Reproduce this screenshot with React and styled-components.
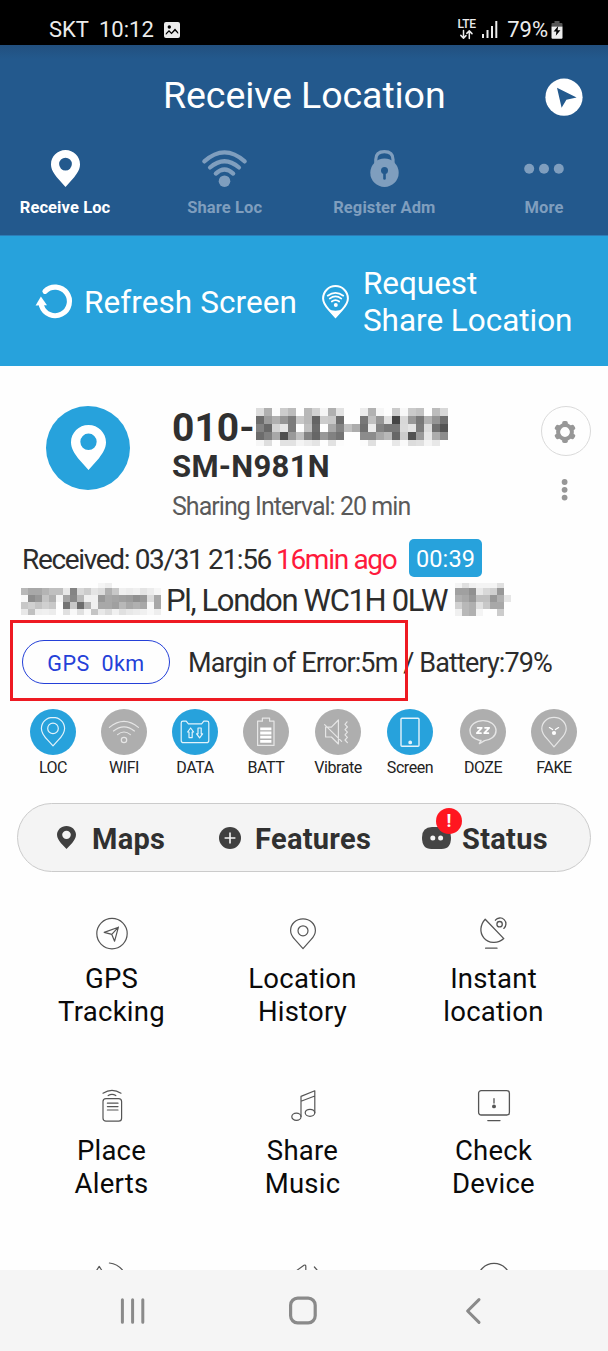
import React from "react";
import styled, { createGlobalStyle } from "styled-components";

const Global = createGlobalStyle`
  * { box-sizing: border-box; }
  body { margin: 0; background: #fff; font-family: Roboto, "Liberation Sans", sans-serif; }
  svg { display: block; flex: none; overflow: visible; }
`;

const Screen = styled.div`
  width: 608px;
  height: 1351px;
  overflow: hidden;
  display: flex;
  flex-direction: column;
  background: #fefefe;
`;

/* ---------- status bar ---------- */
const StatusBar = styled.div`
  height: 45px;
  flex: none;
  background: #000;
  color: #ececec;
  display: flex;
  align-items: flex-start;
  justify-content: space-between;
  padding: 16px 45px 0 49px;
  font-size: 22px;
  line-height: 27px;
  white-space: nowrap;
`;
const StatusGroup = styled.div`
  display: flex;
  align-items: center;
  gap: ${(p) => p.$gap}px;
  height: 27px;
`;
const NetType = styled.div`
  display: flex;
  flex-direction: column;
  align-items: center;
  font-size: 12px;
  font-weight: 500;
  line-height: 11px;
  letter-spacing: -0.2px;
  width: 19px;
  padding-bottom: 1px;
`;

/* ---------- header ---------- */
const Header = styled.header`
  height: 191px;
  flex: none;
  background: linear-gradient(#22507f, #23598d 14px);
  border-bottom: 1px solid #2c7db8;
`;
const TitleBar = styled.div`
  height: 105px;
  display: flex;
  align-items: flex-start;
  justify-content: flex-end;
  padding: 33px 25px 0 0;
`;
const Title = styled.h1`
  margin: -5px 0 0;
  flex: 1;
  padding-left: 163px;
  font-size: 37.5px;
  font-weight: 400;
  line-height: 44px;
  letter-spacing: -0.08px;
  color: #fff;
`;
const Tabs = styled.nav`
  display: flex;
  justify-content: space-between;
  padding: 0 8px 0 9px;
`;
const Tab = styled.div`
  width: 112px;
  display: flex;
  flex-direction: column;
  align-items: center;
  gap: 11px;
  color: ${(p) => (p.$active ? "#fff" : "#7f9ebe")};
  font-size: 16.5px;
  font-weight: 700;
  line-height: 20px;
  letter-spacing: 0.1px;
  white-space: nowrap;
`;

/* ---------- action band ---------- */
const ActionBand = styled.div`
  height: 130px;
  flex: none;
  background: #27a2dc;
  color: #fff;
  display: flex;
  align-items: center;
  padding: 2px 0 0 36px;
`;
const ActionLabel = styled.div`
  font-size: 31.5px;
  line-height: 37px;
  letter-spacing: ${(p) => p.$ls || 0}px;
  white-space: nowrap;
  margin: ${(p) => p.$m};
`;
const RequestIcon = styled.span`
  margin: 0 14px 2px 25px;
`;

/* ---------- device card ---------- */
const Device = styled.section`
  display: flex;
  height: 166px;
  flex: none;
  padding: 40px 17px 0 46px;
`;
const Avatar = styled.div`
  width: 84px;
  height: 84px;
  border-radius: 50%;
  background: #27a2dc;
  display: flex;
  justify-content: center;
  padding-top: 19px;
`;
const DeviceInfo = styled.div`
  flex: 1;
  padding: 2px 0 0 42px;
  color: #303030;
  white-space: nowrap;
`;
const Phone = styled.div`
  display: flex;
  align-items: flex-start;
  height: 40px;
  font-size: 39px;
  font-weight: 700;
  line-height: 41px;
  letter-spacing: 0;
`;
const PhonePrefix = styled.span`
  width: 84px;
`;
const Model = styled.div`
  font-size: 31px;
  font-weight: 700;
  line-height: 38px;
  letter-spacing: 0.3px;
`;
const Interval = styled.div`
  font-size: 25px;
  line-height: 42px;
  letter-spacing: -0.97px;
  color: #5a5a5a;
`;
const DeviceActions = styled.div`
  width: 51px;
  display: flex;
  flex-direction: column;
  align-items: center;
  gap: 23px;
`;
const GearButton = styled.div`
  width: 50px;
  height: 50px;
  border: 1.5px solid #dadada;
  border-radius: 50%;
  display: flex;
  align-items: center;
  justify-content: center;
  padding: 1px 2px 0 0;
`;

/* ---------- report lines ---------- */
const Report = styled.section`
  position: relative;
  height: 177px;
  flex: none;
  padding: 6px 0 0 21px;
  color: #2c2c2c;
  white-space: nowrap;
`;
const ReceivedLine = styled.div`
  display: flex;
  align-items: center;
  height: 40px;
  font-size: 28px;
  letter-spacing: -1.3px;
`;
const Received = styled.span`
  padding: 2px 0 0 1px;
  letter-spacing: -1.35px;
  width: 251px;
`;
const Ago = styled.span`
  color: #ff1a3c;
  width: 137px;
  padding: 2px 0 0 4px;
`;
const Countdown = styled.span`
  width: 73px;
  height: 38px;
  border-radius: 5px;
  background: #27a2dc;
  color: #fff;
  font-size: 23.5px;
  line-height: 40px;
  letter-spacing: 0.1px;
  text-align: center;
`;
const AddressLine = styled.div`
  display: flex;
  align-items: flex-start;
  padding-top: 5px;
  height: 40px;
  font-size: 31px;
  line-height: 35px;
  letter-spacing: -1.35px;
`;
const AddressText = styled.span`
  width: 294px;
  padding-left: 5px;
`;
const AccuracyLine = styled.div`
  display: flex;
  align-items: center;
  height: 88px;
  font-size: 27px;
  letter-spacing: -0.88px;
  gap: 18px;
  padding-left: 1px;
`;
const Accuracy = styled.span`
  padding-top: 2px;
`;
const GpsPill = styled.div`
  width: 148px;
  height: 44px;
  border: 1.6px solid #2440d8;
  border-radius: 22px;
  color: #2440d8;
  font-size: 21.5px;
  line-height: 45px;
  letter-spacing: 0.5px;
  text-align: center;
  white-space: pre;
`;
const Highlight = styled.div`
  position: absolute;
  left: 10px;
  top: 88px;
  width: 398px;
  height: 81px;
  border: 3px solid #ee1a22;
`;

/* ---------- sensor chips ---------- */
const Sensors = styled.section`
  display: flex;
  height: 94px;
  flex: none;
  padding: 0 0 0 18px;
`;
const Sensor = styled.div`
  width: 70px;
  margin-left: ${(p) => p.$gap}px;
  display: flex;
  flex-direction: column;
  align-items: center;
  gap: 1px;
  font-size: 16px;
  line-height: 24px;
  letter-spacing: -0.45px;
  color: #222;
`;
const SensorDot = styled.div`
  width: 46px;
  height: 46px;
  border-radius: 50%;
  background: ${(p) => (p.$on ? "#27a2dc" : "#aeaeae")};
  display: flex;
  align-items: center;
  justify-content: center;
`;

/* ---------- segmented bar ---------- */
const Segments = styled.nav`
  position: relative;
  height: 69px;
  flex: none;
  margin: 0 17px;
  border: 1.5px solid #cbcbcb;
  border-radius: 35px;
  background: #f4f4f4;
  display: flex;
  align-items: center;
  padding-left: 39px;
  color: #303030;
  font-size: 29px;
  font-weight: 700;
  letter-spacing: 0.3px;
  white-space: nowrap;
`;
const Segment = styled.div`
  display: flex;
  align-items: center;
  width: ${(p) => p.$w}px;
  gap: ${(p) => p.$gap}px;
`;
const SegmentLabel = styled.span`
  padding-top: 2px;
`;
const AlertBadge = styled.div`
  position: absolute;
  left: 418px;
  top: 4px;
  width: 26px;
  height: 26px;
  border-radius: 50%;
  background: #ff1620;
  color: #fff;
  font-size: 18px;
  line-height: 26px;
  text-align: center;
`;

/* ---------- feature grid ---------- */
const Grid = styled.section`
  flex: 1;
  min-height: 0;
  overflow: hidden;
  display: grid;
  grid-template-columns: repeat(3, 191px);
  grid-auto-rows: 172px;
  padding: 46px 0 0 16px;
`;
const Feature = styled.div`
  display: flex;
  flex-direction: column;
  align-items: center;
  gap: 13px;
  color: #0a0a0a;
  font-size: 27.5px;
  line-height: 32.5px;
  letter-spacing: 0.25px;
  text-align: center;
  white-space: pre-line;
`;

const NavBar = styled.footer`
  height: 81px;
  flex: none;
  background: #f5f5f5;
  display: flex;
  align-items: center;
  gap: 143px;
  padding-left: 120px;
`;
const BackKey = styled.div`
  margin-left: 5px;
`;

/* ---------- pixelated (redacted) areas ---------- */
const PHONE_CELLS = [
  "dd b0 fc cc bc ff b8 d2 f5 b0 e2 ff ff ec b2 f6 ff cb f8 ca c2 ff bc d8",
  "6c 9c b0 96 7c c8 b8 64 cc c8 6c ff ff 78 c0 96 e0 44 d8 98 78 b2 94 70",
  "82 68 d4 e6 7c ff c0 6c ff a8 84 c0 ac 70 ec 82 76 76 da e4 7c dc 70 54",
  "6c 80 a8 50 9a c0 84 66 98 82 74 ff ff 8c 8c a8 b8 66 cc 52 9a e6 ac 8c",
  "f6 de ff e2 e2 f4 ec e4 ff e2 fc ff ff fc e0 ff ff e8 fa dc e0 f4 e8 ff",
];
const STREET_CELLS = [
  "ff ff ff ff ff ff ff ff ff ff ff f5 ee ff ff ff ff ff ff ff",
  "b8 a8 a8 b4 c0 c0 e8 84 d8 cc e4 dc b0 c8 f0 ec f0 e4 ec f6",
  "f8 8c 98 c4 b0 f4 a4 88 b8 f0 f0 98 a8 a4 a0 9c 90 98 dc a8",
  "c8 d0 c4 d0 c8 ff 74 c8 6c b4 f0 a8 a8 a0 b8 a8 b0 a8 f8 a8",
  "e8 c0 ee f0 ec ff e0 f8 e0 f8 c4 e8 dc f0 e0 e8 ec f0 f8 ee",
];
const TAIL_CELLS = [
  "f4 e0 f0 f4 f4 f4 e0 ff",
  "a0 a0 90 e8 d8 d0 98 ff",
  "b0 a8 98 c0 c0 98 b0 e6",
  "d0 b8 b0 e0 c8 a8 a8 ff",
  "f0 b8 b0 f4 ff ff cc ff",
];
function Mosaic({ cells, size, heights }) {
  const rows = cells.map((r) => r.split(" "));
  const tops = heights.map((_, i) => heights.slice(0, i).reduce((a, b) => a + b, 0));
  const total = heights.reduce((a, b) => a + b, 0);
  return (
    <svg width={rows[0].length * size} height={total} shapeRendering="crispEdges">
      {rows.map((r, y) =>
        r.map((c, x) =>
          c === "ff" ? null : (
            <rect key={x + "-" + y} x={x * size} y={tops[y]} width={size} height={heights[y]} fill={"#" + c + c + c} />
          )
        )
      )}
    </svg>
  );
}

/* ---------- icons ---------- */
const Line = ({ w, h, sw = 1.2, c = "#555", vb, children }) => (
  <svg width={w} height={h} viewBox={vb || `0 0 ${w} ${h}`} fill="none" stroke={c} strokeWidth={sw} strokeLinecap="round" strokeLinejoin="round">
    {children}
  </svg>
);
const Pin = ({ w, h, color, r = 6.6, cy = 14.5 }) => (
  <svg width={w} height={h} viewBox="0 0 30 38" preserveAspectRatio="none" fill={color} fillRule="evenodd">
    <path d={`M15 0C6.7 0 0 6.6 0 14.6C0 20 3 24 6 28L15 38L24 28C27 24 30 20 30 14.6C30 6.6 23.3 0 15 0Z M15 ${cy - r}a${r} ${r} 0 1 1 0 ${2 * r}a${r} ${r} 0 1 1 0 ${-2 * r}Z`} />
  </svg>
);

const ImageIcon = () => (
  <svg width="16" height="16" viewBox="0 0 16 16">
    <rect width="16" height="16" rx="2" fill="#ececec" />
    <circle cx="5.3" cy="5" r="1.7" fill="#000" />
    <path d="M1.8 11.2L5 8L7.5 10.6L11 6.6L14.2 10.2V12L11 8.8L7.5 12.2L5 9.8L1.8 13Z" fill="#000" />
  </svg>
);
const Arrows = () => (
  <Line w={13} h={9} c="#ececec" sw={1.5}>
    <path d="M3.5 .5V8M.8 5.4L3.5 8.1L6 5.6M9.3 8.5V1M6.8 3.4L9.3 .9L12 3.6" />
  </Line>
);
const Signal = () => (
  <svg width="16" height="17" viewBox="0 0 16 17" fill="#ececec">
    <rect x="0" y="13" width="2" height="4" />
    <rect x="4.5" y="9" width="2" height="8" />
    <rect x="9" y="5" width="2" height="12" />
    <rect x="13.3" y="0" width="2" height="17" />
  </svg>
);
const BatteryIcon = () => (
  <svg width="12" height="18" viewBox="0 0 12 18">
    <path d="M3.5 0H8.5V2H10.5Q11.5 2 11.5 3V5.5H.5V3Q.5 2 1.5 2H3.5Z" fill="#555" />
    <path d="M.5 5.5H11.5V16.5Q11.5 17.7 10.5 17.7H1.5Q.5 17.7 .5 16.5Z" fill="#ececec" />
    <path d="M7.2 5L2.6 10.6H5.4L4.8 14.8L9.4 9.2H6.6Z" fill="#000" />
  </svg>
);
const LocateIcon = () => (
  <svg width="38" height="38" viewBox="0 0 38 38">
    <circle cx="19" cy="19.2" r="18.6" fill="#fff" />
    <path d="M12 9.8L31.6 19.6L21.4 21.8L16.6 29.8Z" fill="#23598d" />
  </svg>
);
const WifiTab = () => (
  <Line w={45} h={37} c="#7f9ebe" sw={4.2}>
    <path d="M2.3 11.4Q22.5 -6.6 42.7 11.4M8 17.5Q22.5 5 37 17.5M13.8 23.6Q22.5 15.4 31.2 23.6" />
    <circle cx="22.5" cy="31.2" r="5.8" fill="#7f9ebe" stroke="none" />
  </Line>
);
const LockTab = () => (
  <svg width="29" height="37" viewBox="0 0 29 37">
    <path d="M5.8 16V9.5Q5.8 1.6 14.4 1.6T23 9.5V16" fill="none" stroke="#7f9ebe" strokeWidth="3.2" />
    <circle cx="14.5" cy="22.8" r="14.2" fill="#7f9ebe" />
    <circle cx="14.5" cy="20.4" r="3.5" fill="#23598d" />
    <path d="M14.5 20V28.4" stroke="#23598d" strokeWidth="2.6" strokeLinecap="round" />
  </svg>
);
const DotsTab = () => (
  <svg width="40" height="37" viewBox="0 0 40 37" fill="#7f9ebe">
    <circle cx="5.2" cy="18.8" r="5" />
    <circle cx="20" cy="18.8" r="5" />
    <circle cx="34.8" cy="18.8" r="5" />
  </svg>
);
const RefreshIcon = () => (
  <svg width="37" height="34" viewBox="0 0 37 34">
    <path d="M9 6.3A14.3 14.3 0 1 1 5.6 21" fill="none" stroke="#fff" strokeWidth="5.2" strokeLinecap="round" />
    <path d="M4.9 11.6L11 20.2L-.4 20.4Z" fill="#fff" />
  </svg>
);
const PinWifi = () => (
  <svg width="27" height="33" viewBox="0 0 27 33" fill="none" stroke="#fff" strokeLinecap="round">
    <path d="M13.5 1.1C6.6 1.1 1.1 6.6 1.1 13.4C1.1 18.3 4 21.5 7 24.8L13.5 32L20 24.8C23 21.5 25.9 18.3 25.9 13.4C25.9 6.6 20.4 1.1 13.5 1.1Z" strokeWidth="2" />
    <path d="M5.6 23.4Q13.5 28 21.4 23.4L13.5 33Z" fill="#fff" stroke="none" />
    <path d="M5.7 10.7Q13.5 5 21.3 10.7M7.7 13.6Q13.5 9.2 19.3 13.6M9.8 16.5Q13.5 13.6 17.2 16.5" strokeWidth="1.7" />
    <circle cx="13.8" cy="20" r="2" fill="#fff" stroke="none" />
  </svg>
);
const GearIcon = () => (
  <svg width="22" height="22" viewBox="0 0 22 22">
    {[0, 60, 120, 180, 240, 300].map((a) => (
      <rect key={a} x="8.2" y="0" width="5.6" height="6" rx="1.8" fill="#979797" transform={`rotate(${a} 11 11)`} />
    ))}
    <circle cx="11" cy="11" r="6.9" fill="none" stroke="#979797" strokeWidth="4" />
  </svg>
);
const KebabIcon = () => (
  <svg width="8" height="22" viewBox="0 0 8 22" fill="#979797">
    <circle cx="2.6" cy="3" r="2.9" />
    <circle cx="2.6" cy="10.8" r="2.9" />
    <circle cx="2.6" cy="18.6" r="2.9" />
  </svg>
);

const W = "#e4f3fb";
const G = "#e6e6e6";
const sensors = [
  {
    name: "LOC",
    on: true,
    gap: 0,
    icon: (
      <Line w={46} h={46} c={W}>
        <path d="M23 8.4C16.4 8.4 11.4 13.3 11.4 19.6C11.4 25 15 28.5 18 31.4L23 36.8L28 31.4C31 28.5 34.6 25 34.6 19.6C34.6 13.3 29.6 8.4 23 8.4Z" />
        <circle cx="23" cy="19.4" r="5.3" />
      </Line>
    ),
  },
  {
    name: "WIFI",
    gap: 1,
    icon: (
      <Line w={46} h={46} c={G}>
        <path d="M8.4 18.4Q23 6.4 37.4 18.4M12.5 22Q23 13.8 33.4 22M16.6 25.6Q23 20.4 29.4 25.6" />
        <circle cx="23" cy="31" r="2.7" />
      </Line>
    ),
  },
  {
    name: "DATA",
    on: true,
    gap: 1,
    icon: (
      <Line w={46} h={46} c={W}>
        <path d="M11 12.2H14.2L16.4 14.8H29.6L31.8 12.2H35Q36.8 12.2 36.8 14V31.4Q36.8 33.6 34.6 33.6H11.4Q9.2 33.6 9.2 31.4V14Q9.2 12.2 11 12.2Z" />
        <path d="M18.6 19L21.6 23H20.2V28.6H17V23H15.6ZM27.6 28.8L24.6 24.8H26V19H29.2V24.8H30.6Z" />
      </Line>
    ),
  },
  {
    name: "BATT",
    gap: 1,
    icon: (
      <Line w={46} h={46} c={G}>
        <path d="M14.6 12.2H19.4V9.2H26.6V12.2H31V36.4H14.6Z" />
        <path d="M17.2 19.8H28.4M17.2 24H28.4M17.2 28.2H28.4M17.2 32.4H28.4" stroke="#fff" strokeWidth="2.8" strokeLinecap="butt" />
      </Line>
    ),
  },
  {
    name: "Vibrate",
    gap: 2,
    icon: (
      <Line w={46} h={46} c={G}>
        <path d="M10.6 18.2H16.4L23.4 11V35L16.4 28H10.6ZM9.6 15.6L26.6 32.4M32 12.8L30 15.4L32.4 18L30 20.6L32.4 23.2L30 25.8L32.4 28.4L30 31L32.4 33.6" />
      </Line>
    ),
  },
  {
    name: "Screen",
    on: true,
    gap: 2,
    icon: (
      <Line w={46} h={46} c={W} sw={1.4}>
        <rect x="14" y="9.2" width="18" height="28" rx="1" />
        <circle cx="23.2" cy="33.4" r="1.2" fill={W} />
      </Line>
    ),
  },
  {
    name: "DOZE",
    gap: 3,
    icon: (
      <Line w={46} h={46} c={G} sw={1.4}>
        <path d="M19.2 31.2C13.6 30 10 26.4 10 21.8C10 16 15.6 11.6 23 11.6S36 16 36 21.8C36 27.2 30.6 31.2 24.6 31.6L19.4 34.6L21 31.4Z" />
        <path d="M17.6 18.8H21.8L16.8 24.2H21M25 18.8H29.2L24.2 24.2H28.4" stroke="#fff" strokeWidth="1.7" />
      </Line>
    ),
  },
  {
    name: "FAKE",
    gap: 1,
    icon: (
      <Line w={46} h={46} c={G}>
        <path d="M23 8.4C16 8.4 10.8 13.4 10.8 19.8C10.8 24.6 13.6 27.4 16.6 30.4L23 37.8L29.4 30.4C32.4 27.4 35.2 24.6 35.2 19.8C35.2 13.4 30 8.4 23 8.4Z" />
        <path d="M18.4 18.6L21.6 20.6M27.6 18.6L24.4 20.6" stroke="#fff" />
        <circle cx="23" cy="24" r="2.1" fill="#fff" stroke="none" />
      </Line>
    ),
  },
];

const PlusIcon = () => (
  <svg width="22" height="22" viewBox="0 0 22 22">
    <circle cx="11" cy="11" r="11" fill="#404040" />
    <path d="M11 5.6V16.4M5.6 11H16.4" stroke="#f4f4f4" strokeWidth="1.6" />
  </svg>
);
const FaceIcon = () => (
  <svg width="29" height="22" viewBox="0 0 29 22">
    <path d="M10 0H19Q29 0 29 10.5Q29 22 19.6 22H9.4Q0 22 0 10.5Q0 0 10 0Z" fill="#454545" />
    <circle cx="10.8" cy="11" r="2.5" fill="#f4f4f4" />
    <circle cx="18.6" cy="11" r="2.5" fill="#f4f4f4" />
  </svg>
);

const features = [
  {
    label: "GPS\nTracking",
    icon: (
      <Line w={32} h={32}>
        <circle cx="16" cy="15.6" r="15.2" />
        <path d="M22.4 9.2L8.2 14.4L15.8 16.4L18.6 23.2ZM22.4 9.2L15.8 16.4" />
      </Line>
    ),
  },
  {
    label: "Location\nHistory",
    icon: (
      <Line w={32} h={32}>
        <path d="M16 .9C9 .9 3.6 6.1 3.6 12.5C3.6 16.3 5.4 18.9 8 21.7L16 30.7L24 21.7C26.6 18.9 28.4 16.3 28.4 12.5C28.4 6.1 23 .9 16 .9Z" />
        <circle cx="16" cy="12.8" r="5" />
      </Line>
    ),
  },
  {
    label: "Instant\nlocation",
    icon: (
      <Line w={32} h={32} sw={1.3}>
        <path d="M7.2 1.2C1.8 7 1.6 14.8 5.8 19.8C10.4 25.4 19.8 26.2 25.8 20.6ZM7.6 30.2H19" />
        <circle cx="21.6" cy="6.2" r="2.7" />
        <path d="M17.4 2.2A5.9 5.9 0 1 1 25.8 10.4" />
      </Line>
    ),
  },
  {
    label: "Place\nAlerts",
    icon: (
      <Line w={32} h={32}>
        <rect x="7" y="8.6" width="18.6" height="22.6" rx="3" />
        <path d="M7 3.2Q16 -2.4 25 3.2M12.2 5.6Q16 3 19.8 5.6M11.4 13.2H22M11.4 16.6H22M11.4 20H22" />
      </Line>
    ),
  },
  {
    label: "Share\nMusic",
    icon: (
      <Line w={32} h={32}>
        <ellipse cx="9.4" cy="26.8" rx="4.6" ry="3.6" />
        <ellipse cx="23" cy="22.8" rx="4.8" ry="3.5" />
        <path d="M14 26.4V6.4L27.8 .8V22.8M14 11.2L27.8 6" />
      </Line>
    ),
  },
  {
    label: "Check\nDevice",
    icon: (
      <Line w={32} h={32} sw={1.3}>
        <rect x=".6" y=".6" width="30.8" height="24.4" rx="2.6" />
        <path d="M9.8 30.6H22M16 8.6V13" />
        <circle cx="16" cy="16.4" r="1.3" fill="#555" />
      </Line>
    ),
  },
  {
    icon: (
      <Line w={32} h={32}>
        <path d="M.6 8.4L3.2 4.4L5.6 8M13.4 1Q21.4 1.8 26.4 8" />
      </Line>
    ),
  },
  {
    icon: (
      <Line w={32} h={32}>
        <path d="M9.8 8.4L17 3.2Q19 2.4 18.8 5V9M27.4 5L30 8" />
      </Line>
    ),
  },
  {
    icon: (
      <Line w={32} h={32}>
        <circle cx="16" cy="17.8" r="16.4" />
      </Line>
    ),
  },
];

export default function App() {
  return (
    <Screen>
      <Global />
      <StatusBar>
        <StatusGroup $gap={10}>
          <span>SKT</span>
          <span>10:12</span>
          <ImageIcon />
        </StatusGroup>
        <StatusGroup $gap={9}>
          <StatusGroup $gap={6}>
            <NetType>
              LTE
              <Arrows />
            </NetType>
            <Signal />
          </StatusGroup>
          <StatusGroup $gap={3}>
            <span>79%</span>
            <BatteryIcon />
          </StatusGroup>
        </StatusGroup>
      </StatusBar>

      <Header>
        <TitleBar>
          <Title>Receive Location</Title>
          <LocateIcon />
        </TitleBar>
        <Tabs>
          <Tab $active><Pin w={29} h={37} color="#fff" />Receive Loc</Tab>
          <Tab><WifiTab />Share Loc</Tab>
          <Tab><LockTab />Register Adm</Tab>
          <Tab><DotsTab />More</Tab>
        </Tabs>
      </Header>

      <ActionBand>
        <RefreshIcon />
        <ActionLabel $m="1px 0 0 11px" $ls={0.07}>Refresh Screen</ActionLabel>
        <RequestIcon><PinWifi /></RequestIcon>
        <ActionLabel $ls={-0.03}>Request<br />Share Location</ActionLabel>
      </ActionBand>

      <Device>
        <Avatar><Pin w={35} h={45} color="#fff" r={7} cy={14.2} /></Avatar>
        <DeviceInfo>
          <Phone>
            <PhonePrefix>010-</PhonePrefix>
            <Mosaic cells={PHONE_CELLS} size={8} heights={[8, 8, 8, 8, 6]} />
          </Phone>
          <Model>SM-N981N</Model>
          <Interval>Sharing Interval: 20 min</Interval>
        </DeviceInfo>
        <DeviceActions>
          <GearButton><GearIcon /></GearButton>
          <KebabIcon />
        </DeviceActions>
      </Device>

      <Report>
        <ReceivedLine>
          <Received>Received: 03/31 21:56</Received>
          <Ago>16min ago</Ago>
          <Countdown>00:39</Countdown>
        </ReceivedLine>
        <AddressLine>
          <Mosaic cells={STREET_CELLS} size={7} heights={[5, 7, 7, 7, 6]} />
          <AddressText>Pl, London WC1H 0LW</AddressText>
          <Mosaic cells={TAIL_CELLS} size={7} heights={[5, 7, 7, 7, 7]} />
        </AddressLine>
        <AccuracyLine>
          <GpsPill>{"GPS  0km"}</GpsPill>
          <Accuracy>Margin of Error:5m / Battery:79%</Accuracy>
        </AccuracyLine>
        <Highlight />
      </Report>

      <Sensors>
        {sensors.map((s) => (
          <Sensor key={s.name} $gap={s.gap}>
            <SensorDot $on={s.on}>{s.icon}</SensorDot>
            {s.name}
          </Sensor>
        ))}
      </Sensors>

      <Segments>
        <Segment $w={161.5} $gap={16}><Pin w={19} h={23} color="#404040" r={6.8} cy={14.6} /><SegmentLabel>Maps</SegmentLabel></Segment>
        <Segment $w={203.5} $gap={14.5}><PlusIcon /><SegmentLabel>Features</SegmentLabel></Segment>
        <Segment $w={140} $gap={11}><FaceIcon /><SegmentLabel>Status</SegmentLabel></Segment>
        <AlertBadge>!</AlertBadge>
      </Segments>

      <Grid>
        {features.map((f, i) => (
          <Feature key={i}>
            {f.icon}
            {f.label}
          </Feature>
        ))}
      </Grid>

      <NavBar>
        <Line w={26} h={26} c="#8a8a8a" sw={3}>
          <path d="M2.4 1.8V24.2M12.6 1.8V24.2M22.8 1.8V24.2" />
        </Line>
        <Line w={28} h={27} c="#8a8a8a" sw={3.2}>
          <rect x="1.6" y="1.2" width="24.6" height="24.6" rx="7" />
        </Line>
        <BackKey>
          <Line w={16} h={26} c="#8a8a8a" sw={3}>
            <path d="M14 1.6L2.6 13L14 24.4" />
          </Line>
        </BackKey>
      </NavBar>
    </Screen>
  );
}
